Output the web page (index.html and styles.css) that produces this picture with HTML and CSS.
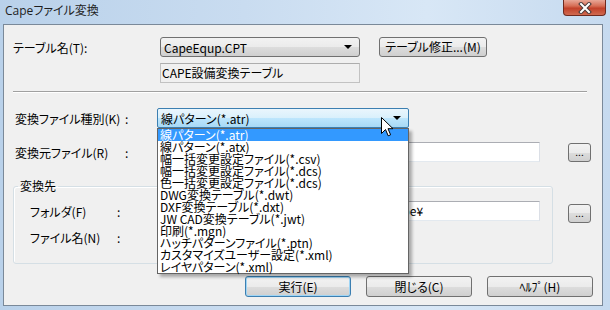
FILE: index.html
```html
<!DOCTYPE html>
<html lang="ja">
<head>
  <meta charset="UTF-8">
  <title>Capeファイル変換</title>
  <link rel="stylesheet" href="styles.css">
</head>
<body>

  <div class="window">
    <!-- Title bar -->
    <div class="titlebar">
      <span class="title">Capeファイル変換</span>
      <div class="close-btn">
        <svg width="16" height="12" viewBox="0 0 16 12">
          <path d="M4 2 L12 10 M12 2 L4 10" stroke="#4a3a3a" stroke-width="4" stroke-linecap="square"/>
          <path d="M4 2 L12 10 M12 2 L4 10" stroke="#fff" stroke-width="2" stroke-linecap="square"/>
        </svg>
      </div>
    </div>

    <div class="client">
      <!-- Table -->
      <div class="row row-table">
        <span class="label label-table">テーブル名(T):</span>
        <div class="combo combo-table">
          <span>CapeEqup.CPT</span>
          <span class="arrow"></span>
        </div>
        <button class="btn btn-edit">テーブル修正...(M)</button>
      </div>
      <div class="row row-desc">
        <div class="readonly">CAPE設備変換テーブル</div>
      </div>

      <div class="sep"></div>

      <!-- File kind -->
      <div class="row row-kind">
        <span class="label label-main">変換ファイル種別(K)</span>
        <span class="colon">:</span>
        <div class="combo-wrap">
          <div class="combo combo-open">
            <span>線パターン(*.atr)</span>
            <span class="arrow"></span>
          </div>
          <ul class="droplist">
            <li class="sel">線パターン(*.atr)</li>
            <li>線パターン(*.atx)</li>
            <li>幅一括変更設定ファイル(*.csv)</li>
            <li>幅一括変更設定ファイル(*.dcs)</li>
            <li>色一括変更設定ファイル(*.dcs)</li>
            <li>DWG変換テーブル(*.dwt)</li>
            <li>DXF変換テーブル(*.dxt)</li>
            <li>JW CAD変換テーブル(*.jwt)</li>
            <li>印刷(*.mgn)</li>
            <li>ハッチパターンファイル(*.ptn)</li>
            <li>カスタマイズユーザー設定(*.xml)</li>
            <li>レイヤパターン(*.xml)</li>
          </ul>
          <svg class="cursor" width="13" height="21" viewBox="0 0 13 21">
            <path d="M0.5 0.5 L0.5 16.5 L4.5 12.5 L7.2 18.8 L9.6 17.8 L7 11.7 L12 11.7 Z" fill="#fff" stroke="#000" stroke-width="1" stroke-linejoin="miter"/>
          </svg>
        </div>
      </div>

      <!-- Source file -->
      <div class="row row-src">
        <span class="label label-main">変換元ファイル(R)</span>
        <span class="colon">:</span>
        <div class="textbox textbox-src"></div>
        <button class="btn btn-dots">...</button>
      </div>

      <!-- Destination -->
      <div class="dest-row">
        <fieldset class="group">
          <legend>変換先</legend>
          <div class="group-row">
            <span class="label label-group">フォルダ(F)</span>
            <span class="colon colon-group">:</span>
            <div class="textbox textbox-folder">C:¥Users¥Public¥Documents¥CAPE¥DB¥Cape¥</div>
          </div>
          <div class="group-row">
            <span class="label label-group">ファイル名(N)</span>
            <span class="colon colon-group">:</span>
          </div>
        </fieldset>
        <div class="side">
          <button class="btn btn-dots">...</button>
        </div>
      </div>

      <!-- Actions -->
      <div class="actions">
        <button class="btn btn-action default">実行(E)</button>
        <button class="btn btn-action">閉じる(C)</button>
        <button class="btn btn-action">ﾍﾙﾌﾟ(H)</button>
      </div>
    </div>
  </div>

</body>
</html>
```

FILE: styles.css
```css
body {
  margin: 0;
  padding: 0;
  font-family: "Noto Sans CJK JP", sans-serif;
  font-size: 12px;
  font-feature-settings: "palt";
  color: #000;
}

.window {
  width: 610px;
  height: 310px;
  display: flex;
  flex-direction: column;
  background: linear-gradient(to right, #b9d1ea 0%, #c9dcf0 40%, #d8e7f6 70%, #c6daef 100%);
  overflow: hidden;
}

.titlebar {
  height: 24px;
  display: flex;
  justify-content: space-between;
  align-items: flex-start;
}

.title {
  padding-left: 5px;
  line-height: 22px;
  font-family: "Open Sans", "Noto Sans CJK JP", sans-serif;
  font-size: 12px;
  color: #1e1e1e;
}

.close-btn {
  width: 43px;
  height: 16px;
  margin-right: 4px;
  box-sizing: border-box;
  border: 1px solid #6e2a1f;
  border-top: none;
  border-radius: 0 0 4px 4px;
  background: linear-gradient(#e8a797 0%, #d66d55 40%, #c2412a 55%, #d06a50 100%);
  display: flex;
  justify-content: center;
  align-items: center;
}

.client {
  margin-left: 3px;
  width: 600px;
  height: 282px;
  box-sizing: border-box;
  border: 1px solid #7a8999;
  background: #f0f0f0;
  padding: 0 9px;
  display: flex;
  flex-direction: column;
}

.row {
  display: flex;
  align-items: center;
  height: 20px;
}

.row-table {
  margin-top: 12px;
}

.row-desc {
  margin-top: 6px;
  padding-left: 147px;
}

.label {
  white-space: nowrap;
}

.label-table {
  width: 147px;
}

.label-main {
  width: 110px;
  margin-left: 2px;
}

.colon {
  width: 32px;
}

.combo {
  height: 20px;
  box-sizing: border-box;
  display: flex;
  align-items: center;
  justify-content: space-between;
  padding: 0 7px 0 3px;
  white-space: nowrap;
}

.combo-table {
  width: 200px;
  border: 1px solid #707070;
  border-radius: 3px;
  background: linear-gradient(#f2f2f2 0%, #ebebeb 50%, #dddddd 50%, #cfcfcf 100%);
}

.arrow {
  width: 0;
  height: 0;
  border-left: 4px solid transparent;
  border-right: 4px solid transparent;
  border-top: 4px solid #000;
}

.btn {
  height: 20px;
  box-sizing: border-box;
  border: 1px solid #707070;
  border-radius: 3px;
  background: linear-gradient(#f2f2f2 0%, #ebebeb 50%, #dddddd 50%, #cfcfcf 100%);
  font-family: "Noto Sans CJK JP", sans-serif;
  font-size: 12px;
  font-feature-settings: "palt";
  padding: 0;
  color: #000;
  line-height: 16px;
}

.btn-edit {
  width: 108px;
  margin-left: 19px;
}

.readonly {
  width: 200px;
  height: 20px;
  box-sizing: border-box;
  border: 1px solid #c2c2c2;
  border-top-color: #adadad;
  background: #f0f0f0;
  line-height: 18px;
  padding-left: 1px;
  white-space: nowrap;
}

.sep {
  width: 574px;
  margin-top: 8px;
  border-top: 1px solid #a0a0a0;
  border-bottom: 1px solid #ffffff;
}

.row-kind {
  margin-top: 15px;
}

.combo-wrap {
  position: relative;
  width: 252px;
  height: 20px;
}

.combo-open {
  width: 252px;
  border: 1px solid #3c7fb1;
  border-radius: 2px;
  background: linear-gradient(#eaf6fd 0%, #d9f0fc 50%, #bee6fd 50%, #a7d9f5 100%);
}

.droplist {
  position: absolute;
  top: 20px;
  left: 0;
  width: 252px;
  box-sizing: border-box;
  margin: 0;
  padding: 0;
  list-style: none;
  background: #fff;
  border: 1px solid #646464;
  box-shadow: 3px 3px 3px rgba(0, 0, 0, 0.3);
  z-index: 5;
}

.droplist li {
  height: 12px;
  line-height: 12px;
  padding-left: 2px;
  white-space: nowrap;
  font-size: 12px;
}

.droplist li.sel {
  background: #3399ff;
  color: #fff;
}

.cursor {
  position: absolute;
  left: 224px;
  top: 9px;
  z-index: 10;
}

.row-src {
  margin-top: 14px;
}

.textbox {
  height: 20px;
  box-sizing: border-box;
  border: 1px solid;
  border-color: #abadb3 #dbdfe6 #e3e9ef #e2e3ea;
  background: #fff;
  line-height: 18px;
  padding-left: 3px;
  white-space: nowrap;
  overflow: hidden;
}

.textbox-src {
  width: 383px;
}

.btn-dots {
  width: 23px;
  height: 19px;
  margin-left: 28px;
  font-size: 10px;
  line-height: 14px;
}

.dest-row {
  display: flex;
  margin-top: 17px;
}

.group {
  width: 540px;
  box-sizing: border-box;
  margin: 0;
  padding: 8px 0 10px 16px;
  border: 1px solid #d5dfe5;
  border-radius: 3px;
  box-shadow: inset 1px 1px 0 #fff;
}

.group legend {
  margin-left: -12px;
  padding: 0 2px;
  line-height: 14px;
}

.group-row {
  display: flex;
  align-items: center;
  height: 20px;
  margin-bottom: 6px;
}

.label-group {
  width: 87px;
}

.colon-group {
  width: 40px;
}

.textbox-folder {
  width: 383px;
}

.side {
  padding-top: 24px;
}

.side .btn-dots {
  margin-left: 15px;
}

.actions {
  display: flex;
  justify-content: flex-end;
  gap: 15px;
  margin-top: 12px;
}

.btn-action {
  width: 106px;
  height: 21px;
}

.btn-action.default {
  border-color: #3c7fb1;
  box-shadow: inset 0 0 0 1px #9fd5f5;
}
```
